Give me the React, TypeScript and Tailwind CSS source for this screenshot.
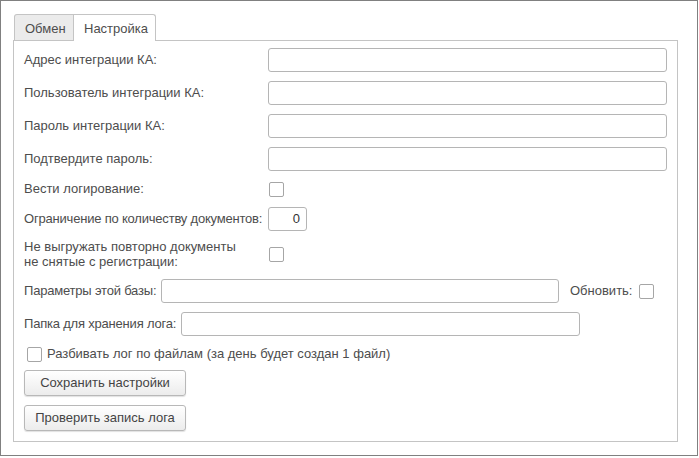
import React from 'react';

const font = { fontFamily: '"Liberation Sans", Arial, sans-serif' };

function Checkbox() {
  return <div className="w-[15px] h-[15px] border border-[#a6a6a6] rounded-[2px] bg-white" />;
}

function TextInput({ className = '', value }: { className?: string; value?: string }) {
  return (
    <div
      className={`h-[24px] border border-[#b5b5b5] rounded-[3px] bg-white flex items-center justify-end pr-[6px] text-[#333] ${className}`}
    >
      {value}
    </div>
  );
}

function Button({ label }: { label: string }) {
  return (
    <div className="w-[162px] h-[26px] border border-[#b8b8b8] rounded-[3px] bg-gradient-to-b from-white to-[#ececec] shadow-[0_1px_1px_rgba(0,0,0,0.12)] flex items-center justify-center text-[#444]">
      {label}
    </div>
  );
}

function FieldRow({ label, className = '' }: { label: string; className?: string }) {
  return (
    <div className={`flex items-center ${className}`}>
      <div className="w-[244px] shrink-0 whitespace-nowrap">{label}</div>
      <TextInput className="w-[399px]" />
    </div>
  );
}

export default function App() {
  return (
    <div className="w-[699px] h-[458px] bg-white text-[13px] text-[#4d4d4d]" style={font}>
      <div className="w-[698px] h-[456px] border border-[#808080] flex flex-col pl-[12px] pr-[19px] pt-[12px] pb-[13px]">
        {/* Tabs */}
        <div className="flex items-end h-[27px]">
          <div className="ml-[1px] w-[60px] h-[26px] border border-b-0 border-[#c4c4c4] rounded-tl-[3px] bg-[#ebebeb] flex items-center pl-[10px] pt-[2px]">
            Обмен
          </div>
          <div className="w-[82px] h-[27px] border border-b-0 border-l-0 border-[#c4c4c4] rounded-tr-[3px] bg-white flex items-center pl-[10px] pt-[1px] relative -mb-px z-10">
            Настройка
          </div>
        </div>

        {/* Panel */}
        <div className="flex-1 border border-[#c4c4c4] bg-white flex flex-col pl-[10px] pr-[9px] pt-[7px]">
          <FieldRow label="Адрес интеграции КА:" />
          <FieldRow label="Пользователь интеграции КА:" className="mt-[9px]" />
          <FieldRow label="Пароль интеграции КА:" className="mt-[9px]" />
          <FieldRow label="Подтвердите пароль:" className="mt-[9px]" />

          <div className="flex items-center h-[18px] mt-[9px]">
            <div className="w-[245px] shrink-0">Вести логирование:</div>
            <Checkbox />
          </div>

          <div className="flex items-center mt-[9px]">
            <div className="w-[244px] shrink-0 whitespace-nowrap tracking-[-0.2px]">
              Ограничение по количеству документов:
            </div>
            <TextInput className="w-[39px]" value="0" />
          </div>

          <div className="flex items-center mt-[8px]">
            <div className="w-[245px] shrink-0 leading-[15px]">
              Не выгружать повторно документы
              <br />
              не снятые с регистрации:
            </div>
            <Checkbox />
          </div>

          <div className="flex items-center mt-[10px]">
            <div className="w-[137px] shrink-0 whitespace-nowrap tracking-[-0.2px]">Параметры этой базы:</div>
            <TextInput className="w-[398px]" />
            <div className="ml-[11px]">Обновить:</div>
            <div className="ml-[7px]">
              <Checkbox />
            </div>
          </div>

          <div className="flex items-center mt-[9px]">
            <div className="w-[157px] shrink-0 whitespace-nowrap tracking-[-0.2px]">Папка для хранения лога:</div>
            <TextInput className="w-[399px] h-[23px]" />
          </div>

          <div className="flex items-center h-[18px] mt-[9px] pl-[3px]">
            <Checkbox />
            <div className="ml-[5px]">Разбивать лог по файлам (за день будет создан 1 файл)</div>
          </div>

          <div className="mt-[7px]">
            <Button label="Сохранить настройки" />
          </div>
          <div className="mt-[9px]">
            <Button label="Проверить запись лога" />
          </div>
        </div>
      </div>
    </div>
  );
}
